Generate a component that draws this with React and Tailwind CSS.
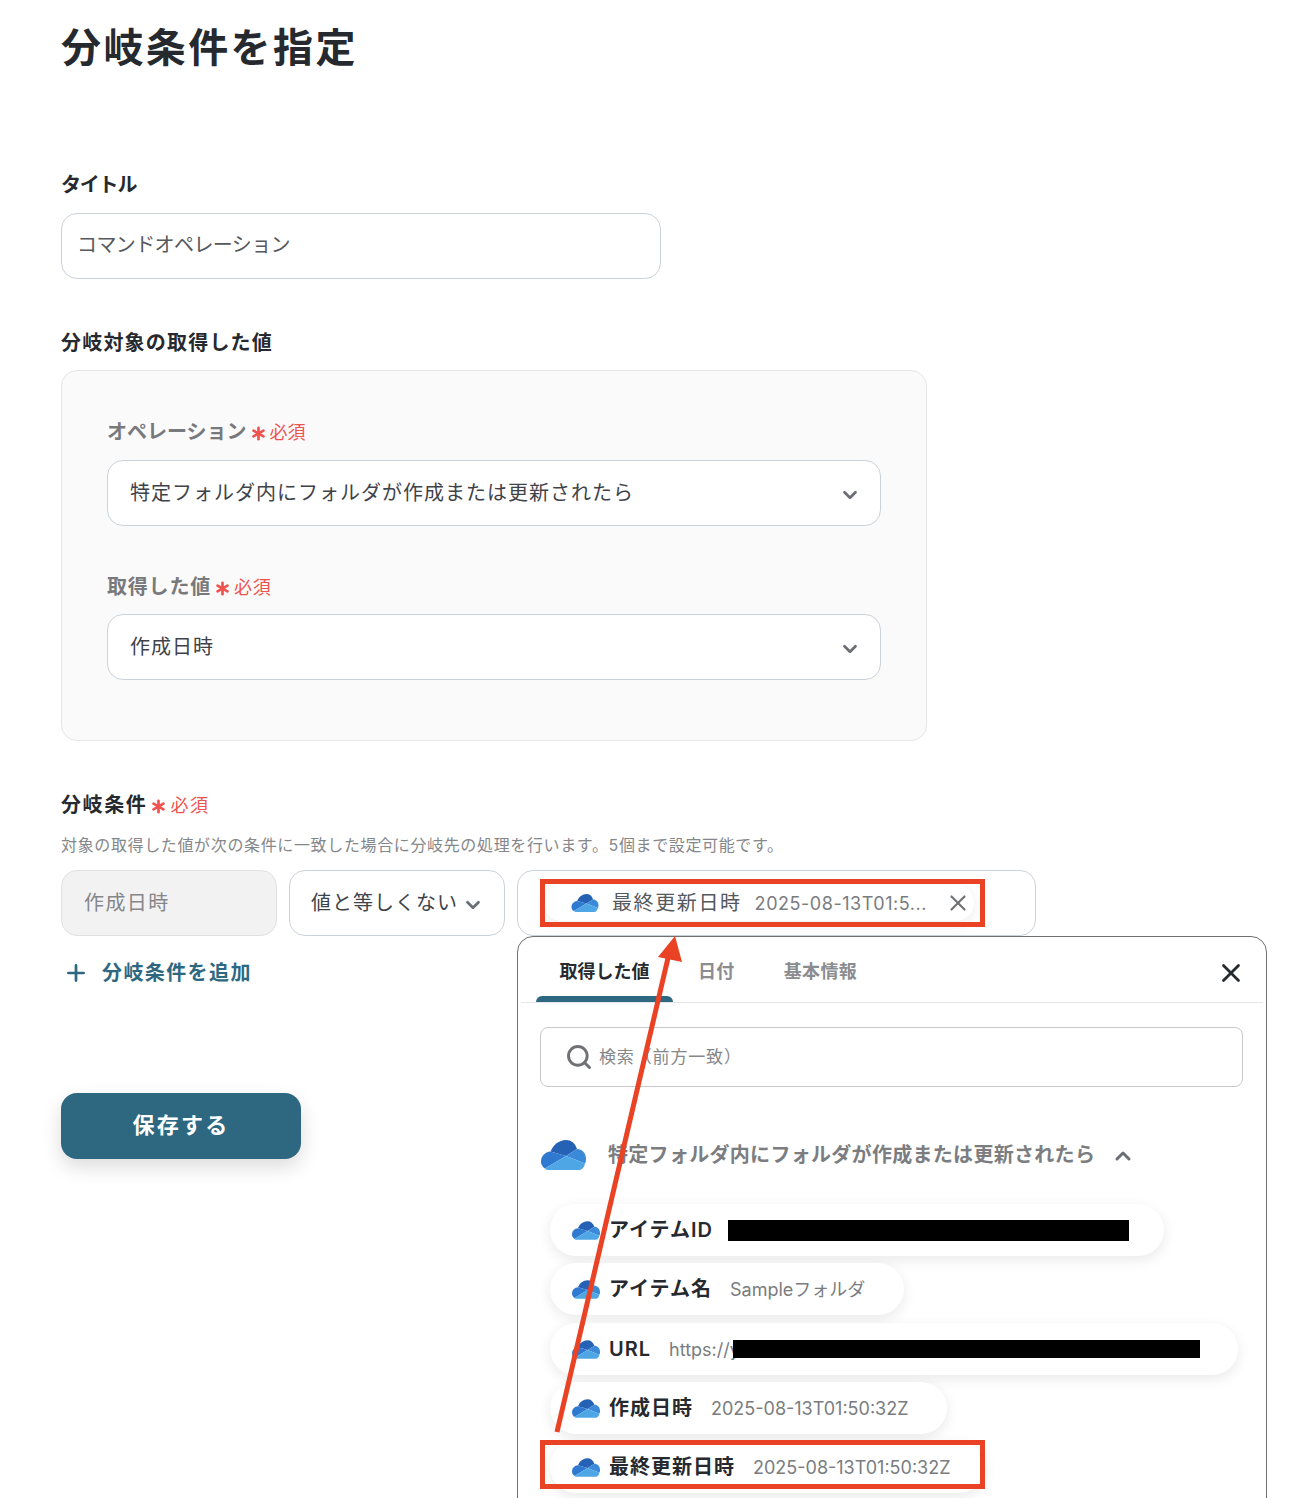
import React from 'react';
import { Asterisk, ChevronDown, ChevronUp, Plus, Search, X } from 'lucide-react';

// OneDrive style cloud
const Cloud = ({ className }) => (
  <svg viewBox="0 0 45 30" className={className}>
    <path d="M9.500 11.500C12 5 18 0 25 0c5 0 9 3 11 9L25 16z" fill="#2561b4" />
    <path d="M9.500 11.500L25 16 4 28.500C1.500 27 0 24.500 0 21.500 0 16 4 12 9.500 11.500z" fill="#2f79d0" />
    <path d="M36 9c5 0 9 4 9 10 0 1.500-.2 3-1 4.500L25 16z" fill="#3a8ad9" />
    <path d="M25 16l19 7.500C43 27.500 41 30 38 30H7c-1 0-2-.5-3-1.500z" fill="#4fa6e5" />
  </svg>
);

const Required = () => (
  <span className="flex items-center text-[18px] font-normal text-[#ef5350]">
    <Asterisk size={23} strokeWidth={2.8} className="mt-[3px]" />
    必須
  </span>
);

const SelectBox = ({ children }) => (
  <div className="flex h-[66px] items-center justify-between rounded-2xl border border-[#cbd2d9] bg-white pl-[22px] pr-[19px] text-[20px] tracking-[0.05em] text-[#3f4349]">
    {children}
    <ChevronDown size={22} strokeWidth={3} className="mt-[3px] text-[#6b6f75]" />
  </div>
);

const ValueChip = ({ name, value, width, redact, gap = 'ml-[18px]' }) => (
  <div className={`flex h-[52px] shrink-0 items-center rounded-full bg-white pl-[22px] shadow-[0_4px_14px_rgba(0,0,0,0.09)] ${width}`}>
    <Cloud className="h-[19px] w-[28px] shrink-0" />
    <span className="ml-[9px] text-[20px] font-semibold tracking-[0.05em] text-[#26292e]">{name}</span>
    {value && <span className={`${gap} text-[18px] text-[#797c80]`}>{value}</span>}
    {redact && <span className={`bg-black ${redact}`} />}
  </div>
);

const Popover = () => (
  <div className="absolute left-[-1px] top-[65px] h-[640px] w-[750px] rounded-2xl border border-[#6f6f6f] bg-white px-[3px]">
    <div className="flex h-[66px] items-end justify-between border-b border-[#e3e5e8]">
      <div className="flex items-end pl-[15px] text-[18px] font-semibold text-[#8a8c8f]">
        <div className="flex h-[66px] w-[137px] flex-col items-center justify-between pt-[22px] text-[#26292e]">
          取得した値
          <div className="h-[6px] w-full rounded-t-md bg-[#2e6880]" />
        </div>
        <div className="ml-[25px] h-[66px] pt-[22px] tracking-[0.02em]">日付</div>
        <div className="ml-[49px] h-[66px] pt-[22px] tracking-[0.02em]">基本情報</div>
      </div>
      <X size={30} strokeWidth={2.2} className="mb-[14px] mr-[17px] text-[#26292e]" />
    </div>
    <div className="ml-[19px] mt-[24px] flex h-[60px] w-[703px] items-center rounded-lg border border-[#c8c9cb] pl-[24px] text-[17px] tracking-[0.05em] text-[#85878a]">
      <Search size={28} strokeWidth={2.5} className="text-[#6f7174]" />
      <span className="ml-[6px] mt-[2px]">検索（前方一致）</span>
    </div>
    <div className="ml-[20px] mt-[53px] flex items-center text-[20px] font-semibold tracking-[0.015em] text-[#7b7d80]">
      <Cloud className="h-[30px] w-[45px]" />
      <span className="ml-[22px]">特定フォルダ内にフォルダが作成または更新されたら</span>
      <ChevronUp size={24} strokeWidth={3} className="ml-[16px] mt-[1px] text-[#6b6f75]" />
    </div>
    <div className="ml-[29px] mt-[34px] flex flex-col gap-[7px]">
      <ValueChip name="アイテムID" width="w-[614px]" redact="ml-[15px] h-[21px] w-[401px]" />
      <ValueChip name="アイテム名" value="Sampleフォルダ" width="w-[354px]" />
      <ValueChip name="URL" value="https://y" width="mt-px w-[688px]" redact="-ml-[7px] h-[18px] w-[467px]" />
      <ValueChip name="作成日時" value="2025-08-13T01:50:32Z" width="w-[397px]" />
      <ValueChip name="最終更新日時" value="2025-08-13T01:50:32Z" width="w-[435px]" />
    </div>
  </div>
);

const App = () => {
  return (
    <div className="relative h-[1498px] w-[1312px] overflow-hidden bg-white pl-[61px] font-['Inter','Noto_Sans_CJK_JP',sans-serif] text-[#26292e]">
      <h1 className="pt-[19px] text-[40px] font-semibold leading-[58px] tracking-[0.06em]">分岐条件を指定</h1>

      <label className="mt-[93px] block text-[20px] font-semibold leading-[30px] tracking-[-0.06em]">タイトル</label>
      <div className="mt-[13px] flex h-[66px] w-[600px] items-center rounded-2xl border border-[#cbd2d9] pb-[3px] pl-[15px] text-[20px] tracking-[-0.03em] text-[#55585c]">
        コマンドオペレーション
      </div>

      <label className="mt-[49px] block text-[20px] font-semibold leading-[30px] tracking-[0.06em]">分岐対象の取得した値</label>
      <div className="mt-[12px] h-[371px] w-[866px] rounded-2xl border border-[#e4e6e9] bg-[#fafafa] px-[45px] pt-[46px]">
        <div className="flex h-[30px] items-center text-[20px] font-semibold text-[#77797c]">
          オペレーション<Required />
        </div>
        <div className="mt-[13px]">
          <SelectBox>特定フォルダ内にフォルダが作成または更新されたら</SelectBox>
        </div>
        <div className="mt-[46px] flex h-[30px] items-center text-[20px] font-semibold tracking-[0.04em] text-[#77797c]">
          取得した値<Required />
        </div>
        <div className="mt-[12px]">
          <SelectBox>作成日時</SelectBox>
        </div>
      </div>

      <div className="mt-[49px] flex h-[30px] items-center text-[20px] font-semibold tracking-[0.08em]">
        分岐条件<Required />
      </div>
      <p className="mt-[13px] text-[16px] leading-[24px] tracking-[0.04em] text-[#85878a]">対象の取得した値が次の条件に一致した場合に分岐先の処理を行います。5個まで設定可能です。</p>

      <div className="mt-[13px] flex gap-[12px]">
        <div className="flex h-[66px] w-[216px] items-center rounded-2xl border border-[#dfe1e4] bg-[#f2f2f2] pl-[22px] text-[20px] tracking-[0.07em] text-[#85878a]">作成日時</div>
        <div className="flex h-[66px] w-[216px] items-center rounded-2xl border border-[#cbd2d9] pl-[21px] text-[20px] tracking-[0.05em] text-[#3f4349]">
          値と等しくない
          <ChevronDown size={22} strokeWidth={3} className="ml-[4px] mt-[3px] text-[#6b6f75]" />
        </div>
        <div className="relative h-[66px] w-[519px] rounded-2xl border border-[#cbd2d9] pl-[26px] pt-[14px]">
          <div className="flex h-[36px] w-[430px] items-center rounded-full bg-white pl-[27px] shadow-[0_4px_14px_rgba(0,0,0,0.08)]">
            <Cloud className="h-[18px] w-[28px] shrink-0" />
            <span className="ml-[13px] text-[20px] tracking-[0.08em] text-[#55585c]">最終更新日時</span>
            <span className="ml-[13px] text-[18px] tracking-[0.03em] text-[#797c80]">2025-08-13T01:5...</span>
            <X size={26} strokeWidth={2} className="ml-[18px] text-[#6f7174]" />
          </div>
          <Popover />
        </div>
      </div>

      <div className="ml-[2px] mt-[22px] flex h-[30px] items-center text-[20px] font-semibold tracking-[0.07em] text-[#2e6880]">
        <Plus size={26} strokeWidth={2.5} />
        <span className="ml-[13px]">分岐条件を追加</span>
      </div>

      <button className="mt-[105px] block h-[66px] w-[240px] rounded-2xl bg-[#2e6880] pb-[2px] text-[22px] font-semibold tracking-[0.1em] text-white shadow-[0_8px_20px_rgba(0,0,0,0.14)]">
        保存する
      </button>

      {/* red annotations drawn over the screenshot */}
      <div className="absolute left-[540px] top-[879px] h-[48px] w-[445px] border-[5px] border-[#ea4224]" />
      <div className="absolute left-[540px] top-[1440px] h-[49px] w-[445px] border-[5px] border-[#ea4224]" />
      <svg className="pointer-events-none absolute left-0 top-0" width="1312" height="1498">
        <line x1="557" y1="1432" x2="668" y2="958" stroke="#ea4224" strokeWidth="5" />
        <polygon points="675,936 658,957 682,962" fill="#ea4224" />
      </svg>
    </div>
  );
};

export default App;
